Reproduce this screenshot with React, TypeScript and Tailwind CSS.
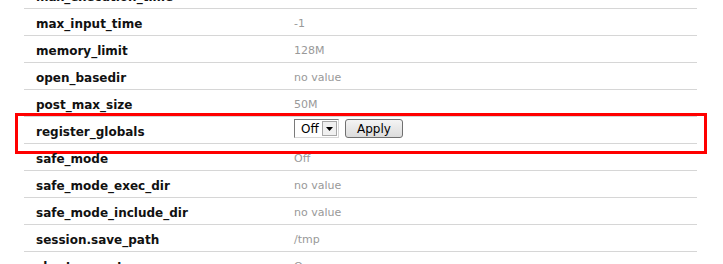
import React from "react";

type Row = { name: string; value?: string; editable?: boolean };

const ROWS: Row[] = [
  { name: "max_execution_time", value: "30" },
  { name: "max_input_time", value: "-1" },
  { name: "memory_limit", value: "128M" },
  { name: "open_basedir", value: "no value" },
  { name: "post_max_size", value: "50M" },
  { name: "register_globals", editable: true },
  { name: "safe_mode", value: "Off" },
  { name: "safe_mode_exec_dir", value: "no value" },
  { name: "safe_mode_include_dir", value: "no value" },
  { name: "session.save_path", value: "/tmp" },
  { name: "short_open_tag", value: "On" },
];

function OffSelect() {
  return (
    <div className="flex h-[19px] w-[45px] items-center justify-between border border-t-[#7a7a7a] border-l-[#7a7a7a] border-r-[#d6d6d6] border-b-[#d6d6d6] bg-white pl-[6px] pr-[1px]">
      <span className="text-[12px] leading-none text-black">Off</span>
      <span className="flex h-[15px] w-[15px] items-center justify-center border border-[#a7a7a7] bg-[#f0f0f0]">
        <svg width="7" height="4" viewBox="0 0 7 4">
          <path d="M0 0h7L3.5 4z" fill="#000" />
        </svg>
      </span>
    </div>
  );
}

export default function App() {
  return (
    <main className="h-[264px] w-[723px] overflow-hidden bg-white font-['DejaVu_Sans',sans-serif]">
      <div className="ml-[24px] -mt-[18px] w-[673px]">
        {ROWS.map((row) => (
          <div
            key={row.name}
            className="relative flex h-[27px] items-start border-b border-[#d6d6d6]"
          >
            <div className="w-[270px] pl-[12px] pt-[2px] text-[12px] font-bold leading-[26px] text-[#111]">
              {row.name}
            </div>
            {row.editable ? (
              <div className="flex items-center gap-[6px] pt-[2px]">
                <OffSelect />
                <button className="flex h-[19px] w-[58px] items-center justify-center rounded-[3px] border border-[#707070] bg-gradient-to-b from-[#f4f4f4] to-[#dcdcdc] text-[12px] leading-none text-black">
                  Apply
                </button>
              </div>
            ) : (
              <div className="pt-[2px] text-[11px] leading-[26px] text-[#999]">{row.value}</div>
            )}
            {row.editable && (
              <div className="pointer-events-none absolute -left-[9px] -top-[4px] h-[41px] w-[692px] border-[3px] border-[#ff0000]" />
            )}
          </div>
        ))}
      </div>
    </main>
  );
}
